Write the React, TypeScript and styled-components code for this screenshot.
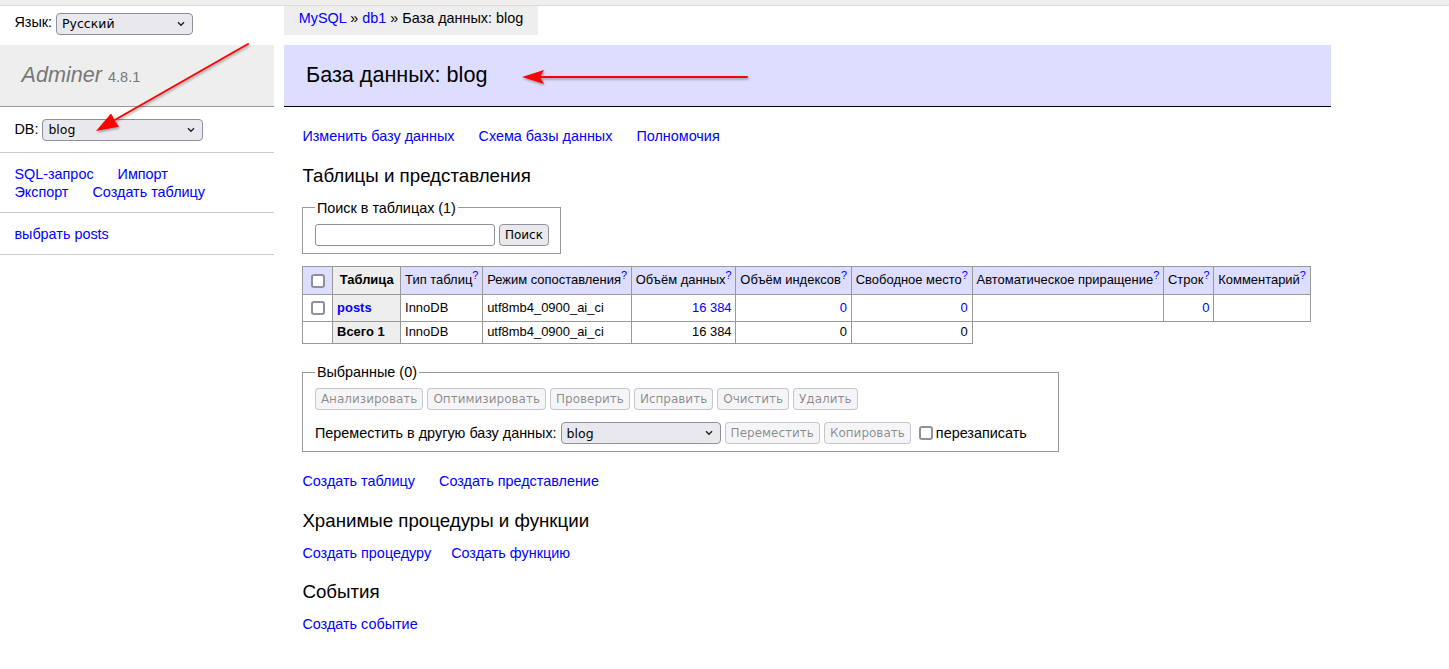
import React from "react";
import styled, { createGlobalStyle } from "styled-components";

const GlobalStyle = createGlobalStyle`
  html, body { margin: 0; padding: 0; background: #fff; }
  body { color: #000; font: 14.4px/1.25 "Liberation Sans", Arial, sans-serif; }
  a { color: blue; text-decoration: none; }
`;

const Root = styled.div`
  position: relative;
  min-height: 669px;
`;

const TopStrip = styled.div`
  height: 5px;
  background: #f0efed;
  border-bottom: 1px solid #dddcda;
`;

const Page = styled.div`
  display: flex;
  align-items: flex-start;
`;

const Sidebar = styled.aside`
  width: 273.6px;
  flex: none;
`;

const LangBar = styled.div`
  height: 38.8px;
  box-sizing: border-box;
  padding: 4.32px 14.4px;
  line-height: 25.92px;
`;

const Logo = styled.h1`
  font-size: 21.6px;
  line-height: 1.25;
  margin: 0;
  padding: 17.28px 21.6px;
  border-bottom: 1px solid #999;
  font-weight: normal;
  color: #777;
  background: #eee;
`;

const LogoName = styled.a`
  color: #777;
  font-style: italic;
`;

const Version = styled.span`
  font-size: 67%;
  color: #777;
`;

const MenuBlock = styled.div`
  padding: 11.52px 14.4px;
  border-bottom: 1px solid #ccc;
`;

const NavLink = styled.a`
  margin-right: 20px;
  white-space: nowrap;
`;

const Main = styled.main`
  margin-left: 10.8px;
`;

const Breadcrumb = styled.div`
  width: fit-content;
  height: 28.8px;
  line-height: 25.92px;
  padding: 0 14.4px;
  background: #eee;
  white-space: nowrap;
`;

const Content = styled.div`
  padding: 10px 20px 20px 18px;
`;

const Title = styled.h2`
  font-size: 21.6px;
  line-height: 1.25;
  margin: 0 0 20px -18px;
  padding: 17.28px 21.6px;
  border-bottom: 1px solid #000;
  color: #000;
  font-weight: normal;
  background: #ddf;
`;

const Links = styled.p<{ $top?: number }>`
  margin: ${(p) => p.$top ?? 11.52}px 20px 0 0;
`;

const Section = styled.h3`
  font-weight: normal;
  font-size: 18.72px;
  line-height: 1.25;
  margin: 18.72px 0 0;
`;

const Fieldset = styled.fieldset<{ $top?: number; $width?: number }>`
  display: inline-block;
  vertical-align: top;
  padding: 7.2px 11.52px;
  margin: ${(p) => p.$top ?? 11.52}px 7.2px 0 0;
  border: 1px solid #999;
  min-width: 0;
  ${(p) => (p.$width ? `width: ${p.$width}px; box-sizing: border-box;` : "")}
`;

const Legend = styled.legend`
  padding: 0 2px;
  line-height: 18px;
`;

const ControlRow = styled.div<{ $gapTop?: number }>`
  display: flex;
  align-items: center;
  gap: 4px;
  height: 22px;
  margin-top: ${(p) => p.$gapTop ?? 0}px;
  white-space: nowrap;
`;

const TextInput = styled.input`
  box-sizing: border-box;
  width: 180px;
  height: 22px;
  border: 1px solid #8f8f9d;
  border-radius: 3px;
  background: #fff;
  padding: 0 4px;
  margin: 0;
`;

const Button = styled.button`
  font: 12px "DejaVu Sans", sans-serif;
  height: 22px;
  padding: 0 5px;
  margin: 0;
  border-radius: 4px;
  box-sizing: border-box;
  border: 1px solid #8f8f9d;
  background: #e9e9ed;
  color: #000;
  &:disabled {
    border-color: rgba(143, 143, 157, 0.45);
    background: rgba(233, 233, 237, 0.45);
    color: rgba(0, 0, 0, 0.45);
  }
`;

const SelectWrap = styled.span`
  position: relative;
  display: inline-block;
  vertical-align: middle;
  line-height: 0;
`;

const NativeSelect = styled.select<{ $w: number }>`
  appearance: none;
  -webkit-appearance: none;
  box-sizing: border-box;
  width: ${(p) => p.$w}px;
  height: 22px;
  margin: 0;
  padding: 0 22px 0 5px;
  font: 12.5px "DejaVu Sans", sans-serif;
  color: #000;
  background: #e9e9ed;
  border: 1px solid #8f8f9d;
  border-radius: 4px;
`;

const Chevron = styled.svg`
  position: absolute;
  right: 8px;
  top: 8px;
  pointer-events: none;
`;

const Select = ({ w, value }: { w: number; value: string }) => (
  <SelectWrap>
    <NativeSelect $w={w} defaultValue={value}>
      <option>{value}</option>
    </NativeSelect>
    <Chevron width="8" height="6" viewBox="0 0 8 6">
      <path d="M1 1.2 L4 4.2 L7 1.2" fill="none" stroke="#222" strokeWidth="1.4" />
    </Chevron>
  </SelectWrap>
);

const Check = styled.input.attrs({ type: "checkbox" })<{ $block?: boolean }>`
  appearance: none;
  -webkit-appearance: none;
  box-sizing: border-box;
  width: 14px;
  height: 14px;
  border: 2px solid #8f8f9d;
  border-radius: 3px;
  background: #fff;
  margin: ${(p) => (p.$block ? "4px 3px 3px 4px" : "0 3px 0 4px")};
  display: block;
  flex: none;
`;

const Table = styled.table`
  margin: 12px 20px 0 0;
  border-collapse: collapse;
  font-size: 12.96px;
  line-height: 1.25;
`;

const Cell = styled.td<{ $num?: boolean; $head?: boolean }>`
  border: 1px solid #999;
  padding: 2.6px 3.9px;
  text-align: ${(p) => (p.$num ? "right" : "left")};
  white-space: nowrap;
  background: ${(p) => (p.$head ? "#ddf" : "transparent")};
`;

const HeadCell = styled.th<{ $center?: boolean }>`
  border: 1px solid #999;
  padding: 2.6px ${(p) => (p.$center ? "6.5px" : "3.9px")};
  background: #eee;
  text-align: ${(p) => (p.$center ? "center" : "left")};
  white-space: nowrap;
`;

const Bold = styled.a`
  font-weight: bold;
`;

const Help = styled.sup`
  font-size: 84%;
  line-height: 0;
  color: blue;
`;

const Footer = styled.div`
  padding: 19px 0 8.2px;
`;

const Label = styled.label`
  display: flex;
  align-items: center;
  white-space: nowrap;
`;

const Overlay = styled.svg`
  position: absolute;
  top: 0;
  left: 0;
  pointer-events: none;
`;

const Arrows = () => (
  <Overlay width="1449" height="669" viewBox="0 0 1449 669">
    <defs>
      <filter id="sh" x="-20%" y="-20%" width="140%" height="140%">
        <feDropShadow dx="1" dy="1.5" stdDeviation="1.2" floodColor="#000" floodOpacity="0.35" />
      </filter>
    </defs>
    <g filter="url(#sh)" fill="#ff0000" stroke="#ff0000">
      <line x1="248" y1="44" x2="113" y2="121" strokeWidth="2" strokeLinecap="round" />
      <polygon points="96,131 111,113.5 115,121 119,126.8" stroke="none" />
      <line x1="747" y1="77" x2="540" y2="77" strokeWidth="2" strokeLinecap="round" />
      <polygon points="522,77 544,70 540,77 544,84" stroke="none" />
    </g>
  </Overlay>
);

const headers = [
  "Тип таблиц",
  "Режим сопоставления",
  "Объём данных",
  "Объём индексов",
  "Свободное место",
  "Автоматическое приращение",
  "Строк",
  "Комментарий",
];

const moveButtons = ["Анализировать", "Оптимизировать", "Проверить", "Исправить", "Очистить", "Удалить"];

export default function App() {
  return (
    <Root>
      <GlobalStyle />
      <TopStrip />
      <Page>
        <Sidebar>
          <LangBar>
            Язык: <Select w={137} value="Русский" />
          </LangBar>
          <Logo>
            <LogoName href="#">Adminer</LogoName> <Version>4.8.1</Version>
          </Logo>
          <MenuBlock>
            DB: <Select w={161} value="blog" />
          </MenuBlock>
          <MenuBlock>
            <NavLink href="#">SQL-запрос</NavLink> <NavLink href="#">Импорт</NavLink>{" "}
            <NavLink href="#">Экспорт</NavLink> <NavLink href="#">Создать таблицу</NavLink>
          </MenuBlock>
          <MenuBlock>
            <a href="#">выбрать</a> <a href="#">posts</a>
          </MenuBlock>
        </Sidebar>
        <Main>
          <Breadcrumb>
            <a href="#">MySQL</a> » <a href="#">db1</a> » База данных: blog
          </Breadcrumb>
          <Content>
            <Title>База данных: blog</Title>
            <Links $top={0}>
              <NavLink href="#">Изменить базу данных</NavLink> <NavLink href="#">Схема базы данных</NavLink>{" "}
              <NavLink href="#">Полномочия</NavLink>
            </Links>
            <Section>Таблицы и представления</Section>
            <Fieldset>
              <Legend>Поиск в таблицах (1)</Legend>
              <ControlRow>
                <TextInput />
                <Button>Поиск</Button>
              </ControlRow>
            </Fieldset>
            <Table>
              <thead>
                <tr>
                  <Cell $head>
                    <Check $block />
                  </Cell>
                  <HeadCell $center>Таблица</HeadCell>
                  {headers.map((h) => (
                    <Cell $head key={h}>
                      {h}
                      <Help>?</Help>
                    </Cell>
                  ))}
                </tr>
              </thead>
              <tbody>
                <tr>
                  <Cell>
                    <Check $block />
                  </Cell>
                  <HeadCell>
                    <Bold href="#">posts</Bold>
                  </HeadCell>
                  <Cell>InnoDB</Cell>
                  <Cell>utf8mb4_0900_ai_ci</Cell>
                  <Cell $num>
                    <a href="#">16&nbsp;384</a>
                  </Cell>
                  <Cell $num>
                    <a href="#">0</a>
                  </Cell>
                  <Cell $num>
                    <a href="#">0</a>
                  </Cell>
                  <Cell $num></Cell>
                  <Cell $num>
                    <a href="#">0</a>
                  </Cell>
                  <Cell></Cell>
                </tr>
                <tr>
                  <Cell></Cell>
                  <HeadCell>Всего 1</HeadCell>
                  <Cell>InnoDB</Cell>
                  <Cell>utf8mb4_0900_ai_ci</Cell>
                  <Cell $num>16&nbsp;384</Cell>
                  <Cell $num>0</Cell>
                  <Cell $num>0</Cell>
                </tr>
              </tbody>
            </Table>
            <Footer>
              <Fieldset $top={0} $width={757}>
                <Legend>Выбранные (0)</Legend>
                <ControlRow>
                  {moveButtons.map((b) => (
                    <Button disabled key={b}>
                      {b}
                    </Button>
                  ))}
                </ControlRow>
                <ControlRow $gapTop={12}>
                  <span>Переместить в другую базу данных:</span>
                  <Select w={160} value="blog" />
                  <Button disabled>Переместить</Button>
                  <Button disabled>Копировать</Button>
                  <Label>
                    <Check />
                    перезаписать
                  </Label>
                </ControlRow>
              </Fieldset>
            </Footer>
            <Links>
              <NavLink href="#">Создать таблицу</NavLink> <NavLink href="#">Создать представление</NavLink>
            </Links>
            <Section>Хранимые процедуры и функции</Section>
            <Links>
              <NavLink href="#">Создать процедуру</NavLink>
              <NavLink href="#">Создать функцию</NavLink>
            </Links>
            <Section>События</Section>
            <Links>
              <NavLink href="#">Создать событие</NavLink>
            </Links>
          </Content>
        </Main>
      </Page>
      <Arrows />
    </Root>
  );
}
